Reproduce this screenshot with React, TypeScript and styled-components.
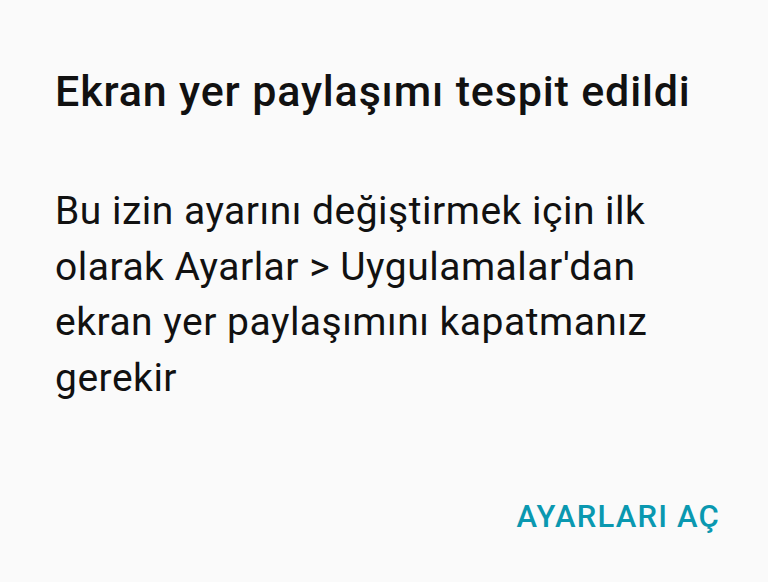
import React from "react";
import styled, { createGlobalStyle } from "styled-components";

const Global = createGlobalStyle`
  html, body { margin: 0; padding: 0; background: #fafafa; }
  body { font-family: Roboto, "Noto Sans", sans-serif; }
`;

const Dialog = styled.div`
  width: 768px;
  height: 582px;
  box-sizing: border-box;
  background: #fafafa;
  padding: 65px 48px 0 55px;
  display: flex;
  flex-direction: column;
`;

const Title = styled.h1`
  margin: 0;
  font-family: Roboto, sans-serif;
  font-weight: 500;
  font-size: 43px;
  line-height: 52px;
  letter-spacing: 0.85px;
  color: #111;
  white-space: nowrap;
`;

const Body = styled.p`
  margin: 67px 0 0;
  font-family: Roboto, sans-serif;
  font-weight: 400;
  font-size: 39px;
  line-height: 55.5px;
  letter-spacing: 0.5px;
  color: #111;
`;

const Actions = styled.div`
  margin-top: auto;
  display: flex;
  justify-content: flex-end;
  padding-bottom: 47px;
`;

const Button = styled.button`
  border: none;
  background: none;
  padding: 0;
  font-family: Roboto, sans-serif;
  font-weight: 500;
  font-size: 31px;
  line-height: 36px;
  letter-spacing: 1.2px;
  color: #0a98b0;
`;

export default function App() {
  return (
    <>
      <Global />
      <Dialog>
        <Title>Ekran yer paylaşımı tespit edildi</Title>
        <Body>
          Bu izin ayarını değiştirmek için ilk olarak Ayarlar &gt; Uygulamalar'dan ekran yer paylaşımını kapatmanız gerekir
        </Body>
        <Actions>
          <Button>AYARLARI AÇ</Button>
        </Actions>
      </Dialog>
    </>
  );
}
